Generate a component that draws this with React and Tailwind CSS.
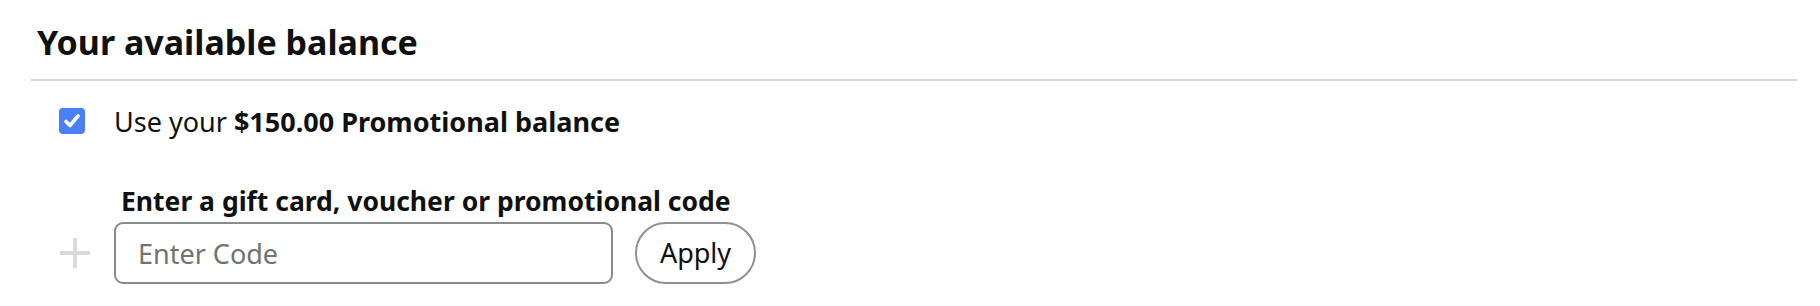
import { useState } from 'react';

function Checkbox({ checked, onChange }) {
  return (
    <button
      onClick={() => onChange(!checked)}
      className={`mt-[3px] w-[26px] h-[26px] rounded-[4px] flex items-center justify-center shrink-0 ${checked ? 'bg-[#4a80f5]' : 'bg-white border-2 border-[#888c8c]'}`}
    >
      {checked && (
        <svg width="20" height="20" viewBox="0 0 20 20">
          <polyline points="4,10.5 8,14.5 16,5" fill="none" stroke="white" strokeWidth="3.6" strokeLinecap="round" strokeLinejoin="round" />
        </svg>
      )}
    </button>
  );
}

export default function App() {
  const [useBalance, setUseBalance] = useState(true);
  const [code, setCode] = useState('');

  return (
    <div className="min-h-[306px] bg-white text-[#0f1111]" style={{ fontFamily: '"Noto Sans", Roboto, sans-serif' }}>
      <div className="pt-[21px] pl-[31px] pr-[23px]">
        <h2 className="pl-[6px] text-[34px] leading-[42px] font-bold">Your available balance</h2>
        <div className="mt-[16px] h-[2px] bg-[#d5d9d9]" />

        <div className="mt-[24px] pl-[28px] flex items-start gap-[29px]">
          <Checkbox checked={useBalance} onChange={setUseBalance} />
          <p className="text-[27px] leading-[34px]">
            Use your <span className="font-bold">$150.00 Promotional balance</span>
          </p>
        </div>

        <div className="mt-[46px] pl-[29px] flex items-end">
          <div className="w-[30px] h-[62px] flex items-center justify-center relative mr-[24px]">
            <div className="w-[30px] h-[4px] bg-[#d9d9d9]" />
            <div className="absolute w-[4px] h-[30px] bg-[#d9d9d9]" />
          </div>
          <div>
            <label className="block pl-[7px] text-[26.5px] leading-[32px] font-bold mb-[5px]">
              Enter a gift card, voucher or promotional code
            </label>
            <div className="flex items-center gap-[22px]">
              <input
                value={code}
                onChange={e => setCode(e.target.value)}
                placeholder="Enter Code"
                className="w-[499px] h-[62px] rounded-[9px] border-2 border-[#888c8c] pl-[22px] text-[27px] placeholder:text-[#6f7373] outline-none"
              />
              <button className="w-[121px] h-[62px] rounded-full border-2 border-[#8d9096] text-[27px] bg-white">
                Apply
              </button>
            </div>
          </div>
        </div>
      </div>
    </div>
  );
}
